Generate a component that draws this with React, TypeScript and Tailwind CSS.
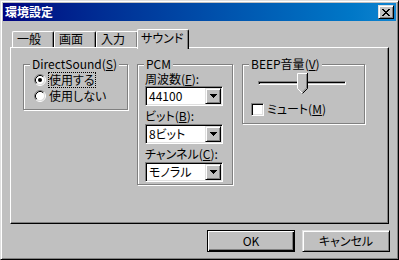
import type { ReactNode } from "react";

const raised =
  "border border-t-[#dfdfdf] border-l-[#dfdfdf] border-r-black border-b-black shadow-[inset_1px_1px_0_#fff,inset_-1px_-1px_0_#808080]";
const sunken =
  "border border-t-[#808080] border-l-[#808080] border-r-white border-b-white shadow-[inset_1px_1px_0_#000,inset_-1px_-1px_0_#dfdfdf]";

function Key({ k }: { k: string }) {
  return (
    <>
      (<span className="underline underline-offset-[1px]">{k}</span>)
    </>
  );
}

function CloseButton() {
  return (
    <div className={`flex h-[14px] w-[16px] items-center justify-center bg-[#c0c0c0] ${raised}`}>
      <svg width="8" height="7" viewBox="0 0 8 7" shapeRendering="crispEdges">
        <rect x="0" y="0" width="2" height="1" />
        <rect x="6" y="0" width="2" height="1" />
        <rect x="1" y="1" width="2" height="1" />
        <rect x="5" y="1" width="2" height="1" />
        <rect x="2" y="2" width="4" height="1" />
        <rect x="3" y="3" width="2" height="1" />
        <rect x="2" y="4" width="4" height="1" />
        <rect x="1" y="5" width="2" height="1" />
        <rect x="5" y="5" width="2" height="1" />
        <rect x="0" y="6" width="2" height="1" />
        <rect x="6" y="6" width="2" height="1" />
      </svg>
    </div>
  );
}

function Radio({ checked }: { checked?: boolean }) {
  return (
    <svg width="12" height="12" viewBox="0 0 12 12" className="shrink-0">
      <circle cx="6" cy="6" r="4.5" fill="#fff" />
      <path d="M2.11 9.89A5.5 5.5 0 0 1 9.89 2.11" fill="none" stroke="#808080" />
      <path d="M9.89 2.11A5.5 5.5 0 0 1 2.11 9.89" fill="none" stroke="#fff" />
      <path d="M2.82 9.18A4.5 4.5 0 0 1 9.18 2.82" fill="none" stroke="#000" />
      <path d="M9.18 2.82A4.5 4.5 0 0 1 2.82 9.18" fill="none" stroke="#dfdfdf" />
      {checked && <circle cx="6" cy="6" r="2" fill="#000" />}
    </svg>
  );
}

function Combo({ value }: { value: string }) {
  return (
    <div className={`flex h-[20px] w-[78px] items-center bg-white p-[1px] ${sunken}`}>
      <span className="flex-1 pl-[2px] text-[12px] leading-[14px]">{value}</span>
      <span className={`flex h-full w-[16px] items-center justify-center bg-[#c0c0c0] ${raised}`}>
        <svg width="7" height="4" viewBox="0 0 7 4" shapeRendering="crispEdges">
          <rect x="0" y="0" width="7" height="1" />
          <rect x="1" y="1" width="5" height="1" />
          <rect x="2" y="2" width="3" height="1" />
          <rect x="3" y="3" width="1" height="1" />
        </svg>
      </span>
    </div>
  );
}

// legend placement follows fieldset padding in Chromium, so padding lives on the inner div
function Group({ label, className, inner, children }: { label: ReactNode; className: string; inner: string; children: ReactNode }) {
  return (
    <fieldset className={`border border-[#808080] shadow-[inset_1px_1px_0_#fff,1px_1px_0_#fff] ${className}`}>
      <legend className="ml-[6px] bg-[#c0c0c0] px-[2px] text-[12px] leading-[14px]">{label}</legend>
      <div className={inner}>{children}</div>
    </fieldset>
  );
}

export default function App() {
  const tabs = ["一般", "画面", "入力"];

  return (
    <div
      className={`h-[260px] w-[399px] bg-[#c0c0c0] p-[2px] font-['Noto_Sans_CJK_JP','Noto_Sans',sans-serif] [font-feature-settings:'palt'] text-black ${raised}`}
    >
      <div className="flex h-[18px] items-center justify-between bg-linear-to-r from-[#000080] to-[#1084d0] px-[2px]">
        <span className="text-[12px] leading-[14px] font-bold text-white">環境設定</span>
        <CloseButton />
      </div>

      <div className="mt-[8px] ml-[7px] flex h-[18px] items-end pl-[2px]">
        {tabs.map((t) => (
          <div
            key={t}
            className="h-[16px] w-[42px] rounded-t-[2px] border-t border-r border-l border-t-white border-r-black border-l-white pl-[4px] text-[12px] leading-[14px] shadow-[inset_-1px_0_0_#808080]"
          >
            {t}
          </div>
        ))}
        <div className="relative z-10 -mb-[2px] -ml-[1px] h-[20px] w-[52px] rounded-t-[2px] border-t border-r border-l border-t-white border-r-black border-l-white bg-[#c0c0c0] pt-[1px] pl-[3px] text-[12px] leading-[14px] shadow-[inset_-1px_0_0_#808080]">
          サウンド
        </div>
      </div>

      <div className="ml-[7px] flex h-[177px] w-[379px] items-start gap-[9px] border border-t-white border-r-black border-b-black border-l-white pt-[9px] pl-[12px] shadow-[inset_-1px_-1px_0_#808080]">
        <Group
          className="w-[105px]"
          inner="pt-[1px] pb-[5px] pl-[10px]"
          label={
            <>
              DirectSound<Key k="S" />
            </>
          }
        >
          <div className="flex h-[16px] items-center gap-[2px]">
            <Radio checked />
            <span className="border border-dotted border-black text-[12px] leading-[14px]">使用する</span>
          </div>
          <div className="flex h-[16px] items-center gap-[2px]">
            <Radio />
            <span className="border border-transparent text-[12px] leading-[14px]">使用しない</span>
          </div>
        </Group>

        <Group className="w-[96px]" inner="pt-[1px] pb-[2px] pl-[7px]" label="PCM">
          <div className="h-[14px] text-[12px] leading-[14px]">
            周波数<Key k="F" />:
          </div>
          <Combo value="44100" />
          <div className="mt-[3px] h-[15px] text-[12px] leading-[14px]">
            ビット<Key k="B" />:
          </div>
          <Combo value="8ビット" />
          <div className="mt-[3px] h-[15px] text-[12px] leading-[14px]">
            チャンネル<Key k="C" />:
          </div>
          <Combo value="モノラル" />
        </Group>

        <Group
          className="w-[123px]"
          inner="pb-[6px]"
          label={
            <>
              BEEP音量<Key k="V" />
            </>
          }
        >
          <div className="relative mt-[1px] ml-[15px] h-[22px] w-[88px]">
            <div className="absolute top-[9px] left-0 h-[4px] w-full border border-t-[#808080] border-r-white border-b-white border-l-[#808080] shadow-[inset_1px_1px_0_#000]" />
            <svg width="11" height="21" viewBox="0 0 11 21" className="absolute top-[1px] left-[39px]">
              <path d="M0 0H11V15.5L5.5 21L0 15.5Z" fill="#c0c0c0" />
              <path d="M0.5 15.5V0.5H10" fill="none" stroke="#fff" />
              <path d="M0.5 15.5L5.5 20.5" fill="none" stroke="#fff" />
              <path d="M10.5 0V15.5L5.5 20.5" fill="none" stroke="#000" />
              <path d="M9.5 1V15L5.5 19" fill="none" stroke="#808080" />
            </svg>
          </div>
          <div className="mt-[7px] flex h-[16px] items-center gap-[3px] pl-[8px]">
            <div className={`h-[13px] w-[13px] bg-white ${sunken}`} />
            <span className="text-[12px] leading-[14px]">
              ミュート<Key k="M" />
            </span>
          </div>
        </Group>
      </div>

      <div className="mt-[6px] flex justify-end gap-[7px] pr-[6px]">
        <button className="h-[22px] w-[88px] border border-black bg-[#c0c0c0] text-[12px] leading-[14px] shadow-[inset_1px_1px_0_#fff,inset_-1px_-1px_0_#000,inset_-2px_-2px_0_#808080]">
          OK
        </button>
        <button className={`h-[22px] w-[88px] bg-[#c0c0c0] text-[12px] leading-[14px] ${raised}`}>キャンセル</button>
      </div>
    </div>
  );
}
